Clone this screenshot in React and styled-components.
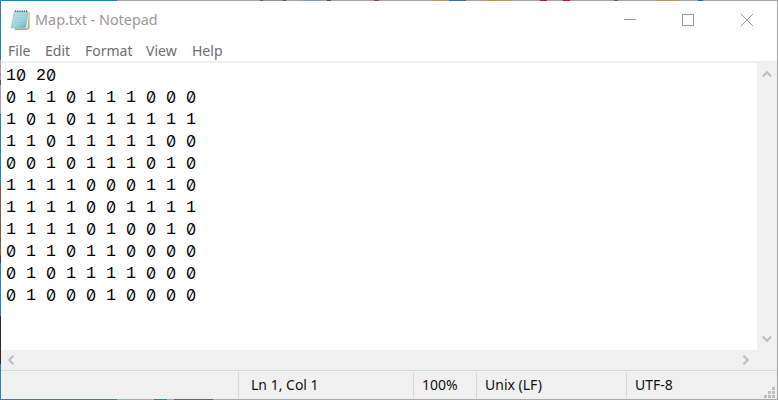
import React from "react";
import styled, { createGlobalStyle } from "styled-components";

const Global = createGlobalStyle`
  * { box-sizing: border-box; }
  body { margin: 0; overflow: hidden; font-family: "Noto Sans", "Open Sans", sans-serif; }
`;

const Desktop = styled.div`
  width: 778px;
  height: 400px;
  display: grid;
  grid-template-columns: 1px 776px 1px;
  grid-template-rows: 1px 398px 1px;
`;

const TopEdge = styled.div`
  grid-column: 1 / -1;
  background: linear-gradient(90deg,
    #2b81a9 0 117px, #a4a3a3 117px 260px, #765847 260px 263px, #8e9ba5 263px 283px,
    #654d3d 283px 286px, #a4a3a3 286px 302px, #8e9ba5 302px 320px, #a4a3a3 320px 327px,
    #5c4739 327px 331px, #a4a3a3 331px 374px, #84505c 374px 379px, #a4a3a3 379px 434px,
    #b09b65 434px 449px, #3e6d96 449px 466px, #a4a3a3 466px 484px, #b09b65 484px 513px,
    #a4a3a3 513px 540px, #9e2637 540px 547px, #a4a3a3 547px 563px, #9e2637 563px 570px,
    #a4a3a3 570px 614px, #625f61 614px 618px, #a4a3a3 618px 656px, #b09b65 656px 679px,
    #a4a3a3 679px 698px, #2f659b 698px 703px, #a4a3a3 703px);
`;

const LeftEdge = styled.div`
  background: linear-gradient(180deg,
    #2b81a9 0 9px, #8a5a45 9px 12px, #2b81a9 12px 59px, #a4a3a3 59px 79px,
    #555 79px 84px, #a4a3a3 84px 113px, #2b81a9 113px 184px, #7b5c48 184px 255px,
    #444 255px 262px, #2b81a9 262px 315px, #2c2a2b 315px 363px, #2b81a9 363px);
`;

const RightEdge = styled.div`
  background: #a4a3a3;
`;

const BottomEdge = styled.div`
  grid-column: 1 / -1;
  background: linear-gradient(90deg, #2b81a9 0 117px, #a9a9a9 117px 154px, #2b81a9 154px 167px, #a9a9a9 167px 174px, #67645f 174px 213px, #a9a9a9 213px);
`;

const Window = styled.main`
  display: grid;
  grid-template-rows: 38px 22px 2px 287px 20px 29px;
  background: #fff;
  overflow: hidden;
`;

const TitleBar = styled.header`
  display: flex;
  align-items: center;
  padding-left: 9px;
`;

const Title = styled.h1`
  margin: 0 auto 0 4px;
  font-size: 14.4px;
  font-weight: 400;
  line-height: 36px;
  color: #999;
  white-space: nowrap;
`;

const Controls = styled.div`
  display: flex;
  align-items: center;
`;

const WindowButton = styled.button`
  width: ${(p) => p.$width}px;
  height: 36px;
  padding: 0;
  border: 0;
  background: none;
  display: flex;
  align-items: center;
  justify-content: center;
`;

const MenuBar = styled.nav`
  display: flex;
  padding-left: 7px;
  font-size: 14px;
  line-height: 23px;
  color: #6d6d6d;
`;

const MenuItem = styled.span`
  width: ${(p) => p.$width}px;
  white-space: nowrap;
`;

const Divider = styled.div`
  background: #f0f0f0;
`;

const Editor = styled.section`
  display: grid;
  grid-template-columns: 1fr 20px;
`;

const Document = styled.pre`
  margin: 0;
  padding: 2px 0 0 5px;
  font: 16.667px/22px "Liberation Mono", monospace;
  color: #000;
`;

const Line = styled.div`
  height: 22px;
`;

const Zero = styled.span`
  display: inline-block;
  width: 10px;
  height: 22px;
  vertical-align: top;
  line-height: 20px;
  text-align: center;
  font-family: "Inter", sans-serif;
  font-size: 16px;
  font-feature-settings: "zero" 1;
`;

const VerticalScroll = styled.div`
  background: #f0f0f0;
  display: flex;
  flex-direction: column;
  align-items: center;
  justify-content: space-between;
  padding: 7px 1px 7px 0;
`;

const HorizontalScroll = styled.div`
  background: #f0f0f0;
  display: flex;
  align-items: center;
  justify-content: space-between;
  padding: 0 27px 1px 6px;
`;

const StatusBar = styled.footer`
  display: grid;
  grid-template-columns: 237px 175px 63px 150px 1fr;
  border-top: 1px solid #d7d7d7;
  background: #f0f0f0;
  font-size: 14px;
  line-height: 28px;
  color: #111;
`;

const StatusCell = styled.div`
  display: flex;
  justify-content: space-between;
  margin: 1px 0;
  padding-left: ${(p) => p.$inset || 8}px;
  border-left: ${(p) => (p.$first ? "0" : "1px solid #d7d7d7")};
  line-height: 26px;
  white-space: nowrap;
`;

const Grip = styled.svg`
  align-self: flex-end;
  margin-right: 2px;
`;

const CHEVRONS = {
  up: [10, 8, "M.8 6.5 5 2.3l4.2 4.2"],
  down: [10, 8, "M.8 1.5 5 5.7l4.2-4.2"],
  left: [8, 10, "M6.5.8 2.3 5l4.2 4.2"],
  right: [8, 10, "M1.5.8 5.7 5 1.5 9.2"],
};

function Chevron({ direction }) {
  const [w, h, d] = CHEVRONS[direction];
  return (
    <svg width={w} height={h} fill="none" stroke="#bfbfbf" strokeWidth="2.2">
      <path d={d} />
    </svg>
  );
}

function NotepadIcon() {
  return (
    <svg width="21" height="21" viewBox="0 0 21 21">
      <defs>
        <linearGradient id="page" x1="0" y1="0" x2="1" y2="1">
          <stop offset="0" stopColor="#c5e9ee" />
          <stop offset=".6" stopColor="#9bd3df" />
          <stop offset="1" stopColor="#5db2c8" />
        </linearGradient>
      </defs>
      <path d="M5 2h14.5v16.5L17 20H5z" fill="#b79d75" />
      <path d="M5 2h14l-1.2 16.5H4z" fill="#efe8d4" />
      <path d="M4.5 1.5H18L15.5 18H1z" fill="url(#page)" stroke="#79b7c5" strokeWidth=".6" />
      <path d="M4 5h12M3.7 7.5h12M3.3 10h12M3 12.5h12M2.3 15h12" stroke="#83c5d2" strokeWidth=".4" />
      <path d="M5 1.2h13" stroke="#68777a" strokeWidth="2" strokeDasharray="1.2 1" />
    </svg>
  );
}

const MENUS = [["File", 37], ["Edit", 40], ["Format", 61], ["View", 46], ["Help", 40]];

const LINES = [
  "10 20",
  "0 1 1 0 1 1 1 0 0 0",
  "1 0 1 0 1 1 1 1 1 1",
  "1 1 0 1 1 1 1 1 0 0",
  "0 0 1 0 1 1 1 0 1 0",
  "1 1 1 1 0 0 0 1 1 0",
  "1 1 1 1 0 0 1 1 1 1",
  "1 1 1 1 0 1 0 0 1 0",
  "0 1 1 0 1 1 0 0 0 0",
  "0 1 0 1 1 1 1 0 0 0",
  "0 1 0 0 0 1 0 0 0 0",
];

export default function App() {
  return (
    <Desktop>
      <Global />
      <TopEdge />
      <LeftEdge />
      <Window>
        <TitleBar>
          <NotepadIcon />
          <Title>Map.txt - Notepad</Title>
          <Controls>
            <WindowButton $width={58} aria-label="Minimize">
              <svg width="12" height="12" stroke="#999"><path d="M0 5.5h12" /></svg>
            </WindowButton>
            <WindowButton $width={58} aria-label="Maximize">
              <svg width="12" height="12" fill="none" stroke="#999"><path d="M.5.5h11v11H.5z" /></svg>
            </WindowButton>
            <WindowButton $width={60} aria-label="Close">
              <svg width="12" height="12" stroke="#999"><path d="m0 0 12 12M12 0 0 12" /></svg>
            </WindowButton>
          </Controls>
        </TitleBar>
        <MenuBar>
          {MENUS.map(([name, width]) => <MenuItem key={name} $width={width}>{name}</MenuItem>)}
        </MenuBar>
        <Divider />
        <Editor>
          <Document>
            {LINES.map((line, i) => (
              <Line key={i}>
                {[...line].map((c, j) => (c === "0" ? <Zero key={j}>0</Zero> : c))}
              </Line>
            ))}
          </Document>
          <VerticalScroll>
            <Chevron direction="up" />
            <Chevron direction="down" />
          </VerticalScroll>
        </Editor>
        <HorizontalScroll>
          <Chevron direction="left" />
          <Chevron direction="right" />
        </HorizontalScroll>
        <StatusBar>
          <StatusCell $first />
          <StatusCell $inset={12}>Ln 1, Col 1</StatusCell>
          <StatusCell>100%</StatusCell>
          <StatusCell>Unix (LF)</StatusCell>
          <StatusCell>
            UTF-8
            <Grip width="11" height="11" fill="#bfbfbf">
              <path d="M8 0h3v3H8zM4 4h3v3H4zM8 4h3v3H8zM0 8h3v3H0zM4 8h3v3H4zM8 8h3v3H8z" />
            </Grip>
          </StatusCell>
        </StatusBar>
      </Window>
      <RightEdge />
      <BottomEdge />
    </Desktop>
  );
}
